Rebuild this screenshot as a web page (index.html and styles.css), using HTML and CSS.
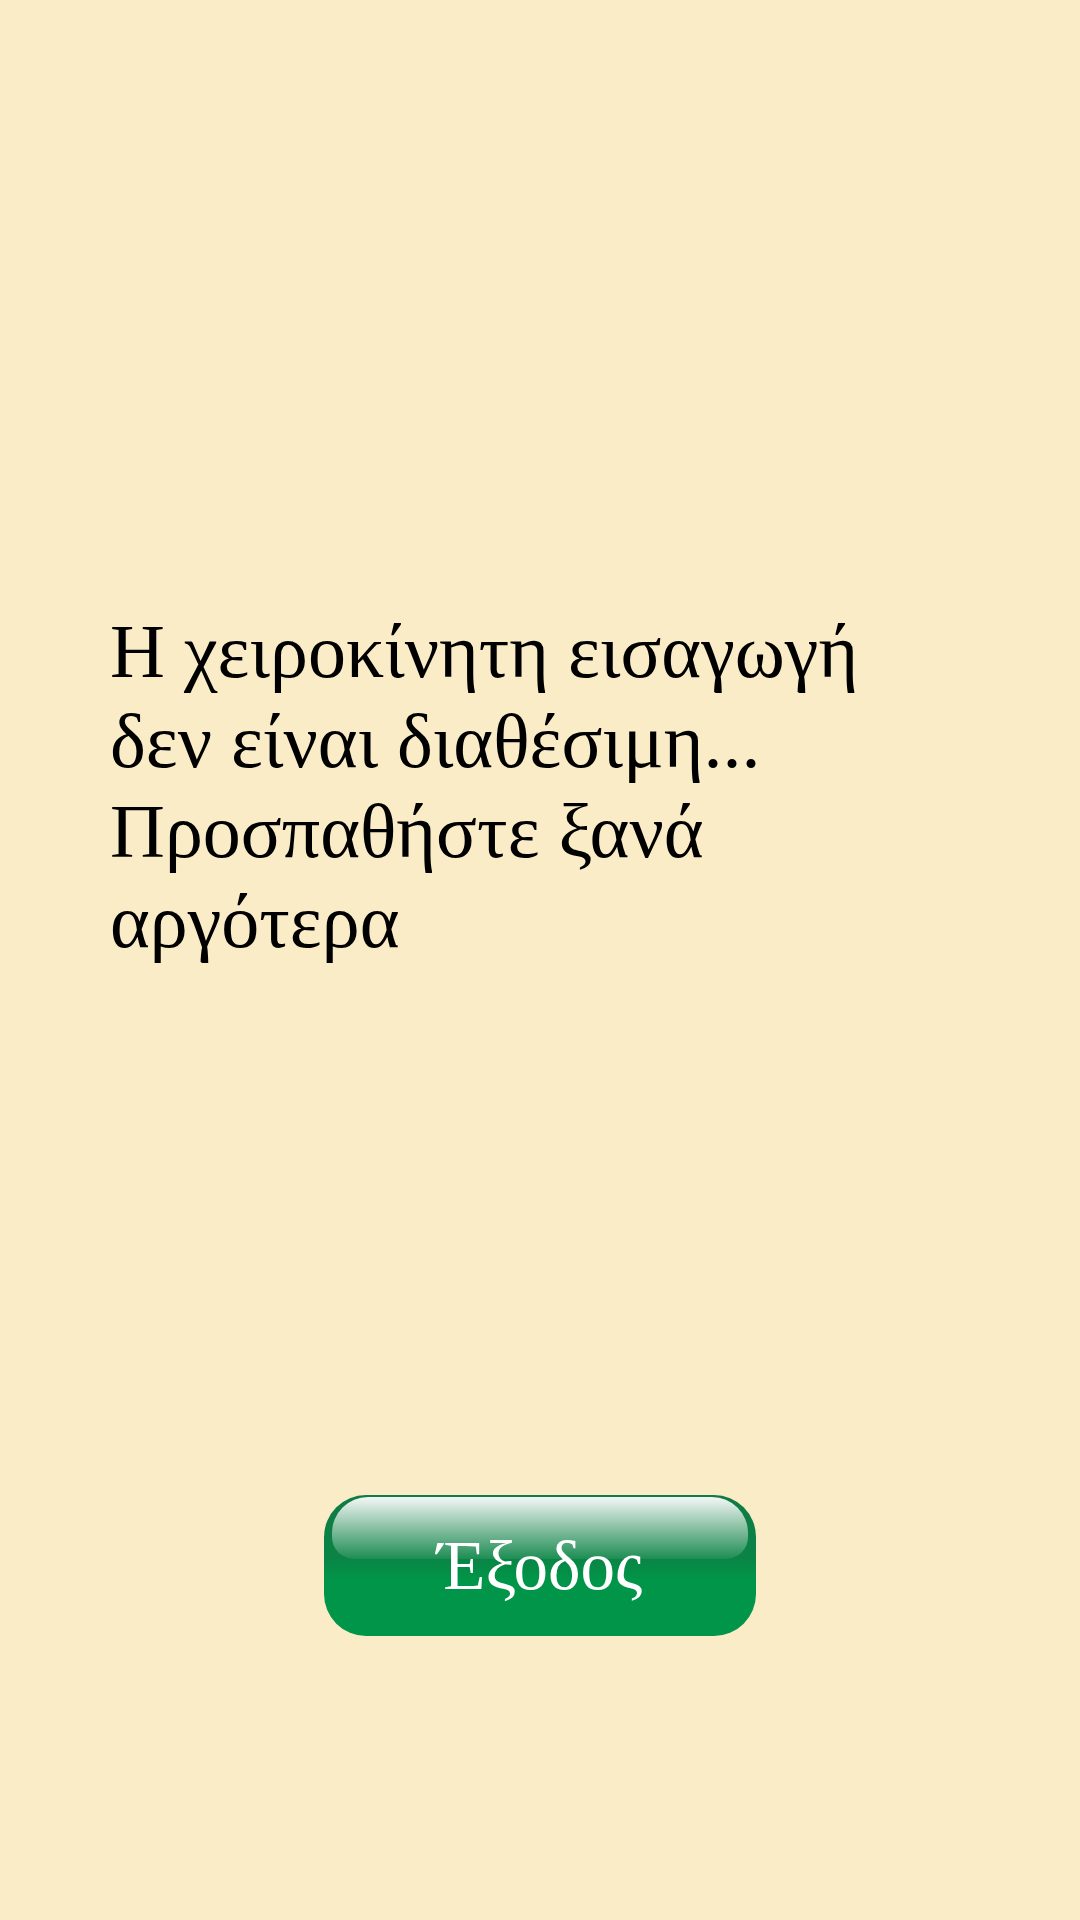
FILE: index.html
```html
<!DOCTYPE html>
<html lang="el">
<head>
<meta charset="utf-8">
<link rel="stylesheet" href="styles.css">
</head>
<body>
<main class="screen">
  <p class="message">Η χειροκίνητη εισαγωγή δεν είναι διαθέσιμη... Προσπαθήστε ξανά αργότερα</p>
  <div class="actions">
    <button class="exit-btn"><span class="gloss"></span><span class="label">Έξοδος</span></button>
  </div>
</main>
</body>
</html>
```
FILE: styles.css
```css
html, body {
  margin: 0;
  padding: 0;
  background: #faecc6;
}
.screen {
  width: 1080px;
  height: 1920px;
  box-sizing: border-box;
  padding: 606px 0 0 0;
  display: flex;
  flex-direction: column;
}
.message {
  margin: 0;
  padding: 0 0 0 110px;
  font-family: "Liberation Serif", "DejaVu Serif", serif;
  font-size: 76px;
  line-height: 90px;
  color: #000;
  width: 780px;
}
.actions {
  display: flex;
  justify-content: center;
  margin-top: 529px;
}
.exit-btn {
  position: relative;
  width: 432px;
  height: 141px;
  border: none;
  border-radius: 42px;
  background: linear-gradient(to bottom, #117a45 0%, #0a8445 45%, #009548 60%, #009548 100%);
  padding: 0;
  display: flex;
  align-items: center;
  justify-content: center;
  overflow: hidden;
}
.gloss {
  position: absolute;
  left: 8px;
  right: 8px;
  top: 2px;
  height: 62px;
  border-radius: 36px 36px 22px 22px;
  background: linear-gradient(to bottom, rgba(255,255,255,0.95) 0%, rgba(255,255,255,0.55) 45%, rgba(255,255,255,0.08) 100%);
}
.label {
  position: relative;
  font-family: "Liberation Serif", "DejaVu Serif", serif;
  font-size: 69px;
  color: #fff;
  margin-top: 2px;
}
```
